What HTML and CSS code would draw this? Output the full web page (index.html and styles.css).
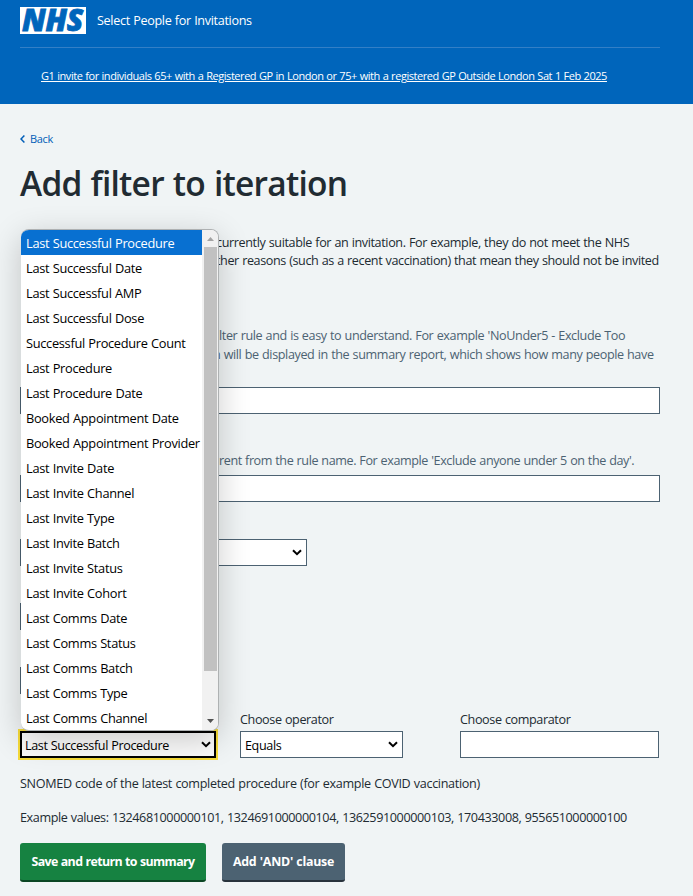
FILE: index.html
```html
<!DOCTYPE html>
<html lang="en">
<head>
<meta charset="utf-8">
<title>Add filter to iteration</title>
<link rel="stylesheet" href="styles.css">
</head>
<body>
<header class="header">
  <div class="brand">
    <span class="logo">NHS</span>
    <span class="service">Select People for Invitations</span>
  </div>
  <a class="campaign">G1 invite for individuals 65+ with a Registered GP in London or 75+ with a registered GP Outside London Sat 1 Feb 2025</a>
</header>
<main class="main">
  <a class="back"><svg width="6" height="9" viewBox="0 0 6 9"><path d="M4.4 .5 1 4 4.4 7.5" fill="none" stroke="currentColor" stroke-width="1.5"/></svg><span>Back</span></a>
  <h1 class="title">Add filter to iteration</h1>
  <div class="intro">
    <p class="t-intro1">currently suitable for an invitation. For example, they do not meet the NHS</p>
    <p class="t-intro2">ther reasons (such as a recent vaccination) that mean they should not be invited</p>
  </div>
  <div class="hint hint-name">
    <p class="t-name1">lter rule and is easy to understand. For example 'NoUnder5 - Exclude Too</p>
    <p class="t-name2">n will be displayed in the summary report, which shows how many people have</p>
  </div>
  <div class="box box-name"></div>
  <div class="hint hint-desc"><p class="t-desc">rent from the rule name. For example 'Exclude anyone under 5 on the day'.</p></div>
  <div class="box box-desc"></div>
  <div class="box select-type"><svg class="chev" width="10" height="7" viewBox="0 0 10 7"><path d="M1 1.2 5 5.2 9 1.2"/></svg></div>
  <div class="box small-a"></div>
  <div class="box small-b"></div>
  <div class="clause">
    <div class="attribute">
      <div class="box select-attr"><span>Last Successful Procedure</span><svg class="chev" width="10" height="7" viewBox="0 0 10 7"><path d="M1 1.2 5 5.2 9 1.2"/></svg></div>
      <div class="menu">
        <ul class="options">
          <li class="selected">Last Successful Procedure</li>
          <li>Last Successful Date</li>
          <li>Last Successful AMP</li>
          <li>Last Successful Dose</li>
          <li>Successful Procedure Count</li>
          <li>Last Procedure</li>
          <li>Last Procedure Date</li>
          <li>Booked Appointment Date</li>
          <li>Booked Appointment Provider</li>
          <li>Last Invite Date</li>
          <li>Last Invite Channel</li>
          <li>Last Invite Type</li>
          <li>Last Invite Batch</li>
          <li>Last Invite Status</li>
          <li>Last Invite Cohort</li>
          <li>Last Comms Date</li>
          <li>Last Comms Status</li>
          <li>Last Comms Batch</li>
          <li>Last Comms Type</li>
          <li>Last Comms Channel</li>
        </ul>
        <div class="scrollbar">
          <svg width="7" height="4" viewBox="0 0 7 4"><path d="M0 4 3.5 0 7 4z" fill="#a3a3a3"/></svg>
          <div class="thumb"></div>
          <svg width="7" height="4" viewBox="0 0 7 4"><path d="M0 0 3.5 4 7 0z" fill="#505050"/></svg>
        </div>
      </div>
    </div>
    <div class="operator">
      <label>Choose operator</label>
      <div class="box"><span>Equals</span><svg class="chev" width="10" height="7" viewBox="0 0 10 7"><path d="M1 1.2 5 5.2 9 1.2"/></svg></div>
    </div>
    <div class="comparator">
      <label>Choose comparator</label>
      <div class="box"></div>
    </div>
  </div>
  <p class="note t-note1">SNOMED code of the latest completed procedure (for example COVID vaccination)</p>
  <p class="note t-note2">Example values: 1324681000000101, 1324691000000104, 1362591000000103, 170433008, 955651000000100</p>
  <div class="buttons">
    <button class="save">Save and return to summary</button>
    <button class="add">Add 'AND' clause</button>
  </div>
</main>
</body>
</html>
```
FILE: styles.css
```css
* { box-sizing: border-box; }
body {
  margin: 0;
  height: 896px;
  overflow: hidden;
  background: #f0f4f5;
  color: #212b32;
  font: 12.6px/18px "Open Sans", "Noto Sans", sans-serif;
  letter-spacing: -0.38px;
  word-spacing: 0.4px;
}
p, h1, ul { margin: 0; padding: 0; white-space: nowrap; }
.header { height: 104px; padding: 7px 33px 0 20px; background: #0065bb; color: #fff; }
.brand { display: flex; height: 41px; border-bottom: 1px solid #337fc6; }
.logo {
  width: 66px; height: 27px; padding-left: 2px;
  background: #fff; color: #0065bb;
  font: italic 800 30px/26px "Open Sans", sans-serif;
  letter-spacing: -0.2px;
  -webkit-text-stroke: 0.8px #0065bb;
}
.service { margin-left: 11px; line-height: 27px; letter-spacing: -0.32px; white-space: nowrap; }
.campaign { display: block; margin: 19px 0 0 21px; font-size: 11px; letter-spacing: -0.446px; text-decoration: underline; white-space: nowrap; }
.main { padding: 26px 33px 0 20px; }
.back { display: flex; align-items: center; gap: 4px; height: 18px; color: #005eb8; font-size: 11px; letter-spacing: -0.3px; }
.title { height: 46px; margin-top: 12px; font-size: 33.5px; line-height: 46px; font-weight: 600; letter-spacing: -0.75px; word-spacing: 1px; }
.intro { height: 54px; margin: 28px 0 0; padding-left: 196px; }
.t-intro2 { letter-spacing: -0.393px; }
.hint { padding-left: 199px; color: #4c6272; line-height: 19px; }
.hint-name { height: 57px; margin-top: 38px; }
.t-name2 { margin-left: -6px; }
.hint-desc { height: 19px; margin-top: 37px; }
.t-desc { letter-spacing: -0.41px; }
.box { display: flex; align-items: center; justify-content: space-between; height: 27px; padding: 0 4px; border: 1px solid #4c6272; background: #fff; color: #000; white-space: nowrap; }
.box span { padding-top: 2px; }
.box-name { margin-top: 4px; }
.box-desc { margin-top: 5px; }
.select-type { width: 287px; margin-top: 37px; }
.small-a, .small-b { width: 160px; margin-top: 37px; }
.chev { display: block; margin-left: auto; }
.chev path { fill: none; stroke: #000; stroke-width: 2; }
.clause { display: grid; grid-template-columns: 196px 163px 199px; column-gap: 24px; margin-top: 16px; }
.comparator { margin-left: 33px; width: 199px; }
label { display: block; height: 21px; padding-top: 1px; }
.attribute { position: relative; padding-top: 21px; }
.select-attr { border: 2px solid #000; box-shadow: 0 0 0 2px #f5da38; background: #fafafa; padding: 0 3px; }
.menu {
  position: absolute; left: 1px; top: -481px;
  display: flex; width: 198px; height: 502px;
  border: 1px solid #aeb1b2; border-left: 0; border-radius: 8px;
  background: #fff; overflow: hidden;
  box-shadow: 0 8px 32px rgba(0,0,0,.2);
}
.options { width: 181px; flex: none; list-style: none; color: #000; font-size: 12.8px; line-height: 25px; letter-spacing: -0.3px; }
.options li { height: 25px; padding: 1px 0 0 5px; }
.options .selected { background: #0870d1; color: #fff; }
.scrollbar { display: flex; flex: 1; flex-direction: column; align-items: center; padding: 7px 0; background: #f1f1f1; }
.thumb { width: 13px; height: 424px; margin: 6px 0 auto; background: #c1c1c1; }
.t-note1 { margin-top: 17px; letter-spacing: -0.32px; }
.t-note2 { margin-top: 16px; letter-spacing: -0.39px; }
.buttons { display: flex; gap: 16px; margin-top: 16px; }
button { height: 39px; padding: 1px 0 0; border: 0; border-bottom: 2px solid; border-radius: 3px; color: #fff; font: 700 12.4px/18px "Open Sans", sans-serif; letter-spacing: -0.6px; word-spacing: 0.4px; white-space: nowrap; }
.save { width: 186px; background: #168241; border-color: #0b4623; }
.add { width: 123px; background: #4c6272; border-color: #28323c; letter-spacing: -0.25px; }
```
